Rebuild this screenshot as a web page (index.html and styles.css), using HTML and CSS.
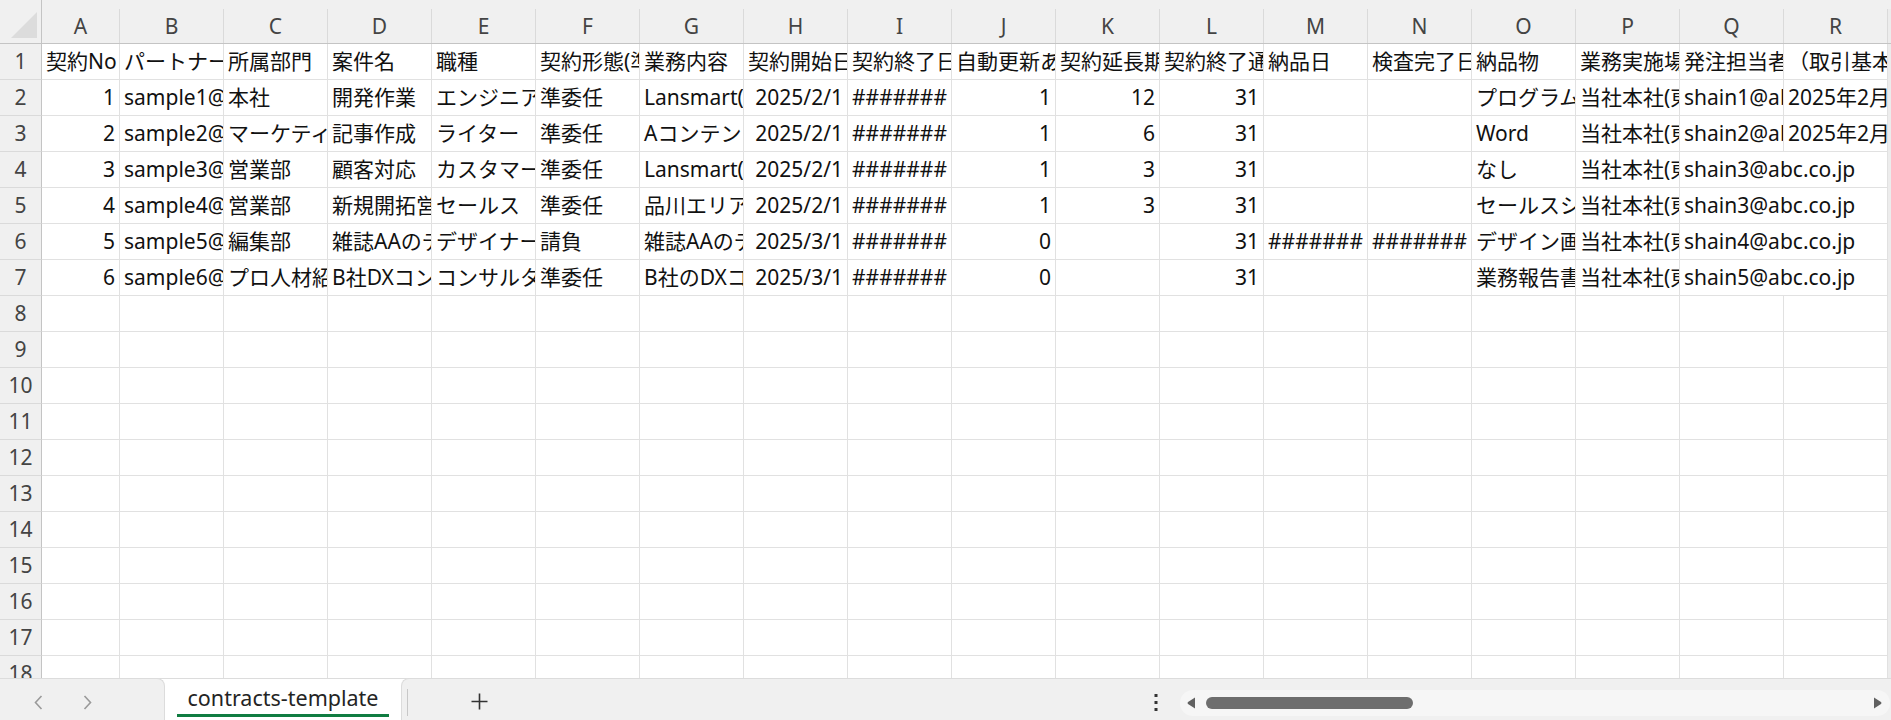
FILE: index.html
```html
<!DOCTYPE html>
<html lang="ja">
<head>
<meta charset="utf-8">
<title>contracts-template</title>
<link rel="stylesheet" href="styles.css">
</head>
<body>
<div class="sheet">
  <div class="colhead">
    <div class="corner"><svg width="41" height="43" viewBox="0 0 41 43"><polygon points="11,38 37,38 37,12" fill="#dcdcdc"/></svg></div>
    <div>A</div><div>B</div><div>C</div><div>D</div><div>E</div><div>F</div><div>G</div><div>H</div><div>I</div><div>J</div><div>K</div><div>L</div><div>M</div><div>N</div><div>O</div><div>P</div><div>Q</div><div>R</div><div class="edge"></div>
  </div>
  <div class="row">
    <div class="rh">1</div>
    <div>契約No</div><div>パートナーメールアドレス</div><div>所属部門</div><div>案件名</div><div>職種</div><div>契約形態(準委任/請負)</div><div>業務内容</div><div>契約開始日</div><div>契約終了日</div><div>自動更新あり</div><div>契約延長期間</div><div>契約終了通知期限</div><div>納品日</div><div>検査完了日</div><div>納品物</div><div>業務実施場所</div><div>発注担当者メールアドレス</div><div>（取引基本契約書）</div>
    <div class="edge"></div>
  </div>
  <div class="row">
    <div class="rh">2</div>
    <div class="n">1</div><div>sample1@example.com</div><div>本社</div><div>開発作業</div><div>エンジニア</div><div>準委任</div><div>Lansmart(ランスマート)の開発</div><div class="n">2025/2/1</div><div class="x">#######</div><div class="n">1</div><div class="n">12</div><div class="n">31</div><div></div><div></div><div>プログラム</div><div>当社本社(東京)</div><div>shain1@abc.co.jp</div><div>2025年2月1日</div>
    <div class="edge"></div>
  </div>
  <div class="row">
    <div class="rh">3</div>
    <div class="n">2</div><div>sample2@example.com</div><div>マーケティング部</div><div>記事作成</div><div>ライター</div><div>準委任</div><div>Aコンテンツの記事作成</div><div class="n">2025/2/1</div><div class="x">#######</div><div class="n">1</div><div class="n">6</div><div class="n">31</div><div></div><div></div><div>Word</div><div>当社本社(東京)</div><div>shain2@abc.co.jp</div><div>2025年2月1日</div>
    <div class="edge"></div>
  </div>
  <div class="row">
    <div class="rh">4</div>
    <div class="n">3</div><div>sample3@example.com</div><div>営業部</div><div>顧客対応</div><div>カスタマーサポート</div><div>準委任</div><div>Lansmart(ランスマート)の顧客対応</div><div class="n">2025/2/1</div><div class="x">#######</div><div class="n">1</div><div class="n">3</div><div class="n">31</div><div></div><div></div><div>なし</div><div>当社本社(東京)</div><div class="wide">shain3@abc.co.jp</div>
    <div class="edge"></div>
  </div>
  <div class="row">
    <div class="rh">5</div>
    <div class="n">4</div><div>sample4@example.com</div><div>営業部</div><div>新規開拓営業</div><div>セールス</div><div>準委任</div><div>品川エリアの新規開拓</div><div class="n">2025/2/1</div><div class="x">#######</div><div class="n">1</div><div class="n">3</div><div class="n">31</div><div></div><div></div><div>セールスシート</div><div>当社本社(東京)</div><div class="wide">shain3@abc.co.jp</div>
    <div class="edge"></div>
  </div>
  <div class="row">
    <div class="rh">6</div>
    <div class="n">5</div><div>sample5@example.com</div><div>編集部</div><div>雑誌AAのデザイン</div><div>デザイナー</div><div>請負</div><div>雑誌AAのデザイン制作</div><div class="n">2025/3/1</div><div class="x">#######</div><div class="n">0</div><div></div><div class="n">31</div><div class="x">#######</div><div class="x">#######</div><div>デザイン画像</div><div>当社本社(東京)</div><div class="wide">shain4@abc.co.jp</div>
    <div class="edge"></div>
  </div>
  <div class="row">
    <div class="rh">7</div>
    <div class="n">6</div><div>sample6@example.com</div><div>プロ人材紹介部</div><div>B社DXコンサル</div><div>コンサルタント</div><div>準委任</div><div>B社のDXコンサルティング</div><div class="n">2025/3/1</div><div class="x">#######</div><div class="n">0</div><div></div><div class="n">31</div><div></div><div></div><div>業務報告書</div><div>当社本社(東京)</div><div class="wide">shain5@abc.co.jp</div>
    <div class="edge"></div>
  </div>
  <div class="row"><div class="rh">8</div><div></div><div></div><div></div><div></div><div></div><div></div><div></div><div></div><div></div><div></div><div></div><div></div><div></div><div></div><div></div><div></div><div></div><div></div><div class="edge"></div></div>
  <div class="row"><div class="rh">9</div><div></div><div></div><div></div><div></div><div></div><div></div><div></div><div></div><div></div><div></div><div></div><div></div><div></div><div></div><div></div><div></div><div></div><div></div><div class="edge"></div></div>
  <div class="row"><div class="rh">10</div><div></div><div></div><div></div><div></div><div></div><div></div><div></div><div></div><div></div><div></div><div></div><div></div><div></div><div></div><div></div><div></div><div></div><div></div><div class="edge"></div></div>
  <div class="row"><div class="rh">11</div><div></div><div></div><div></div><div></div><div></div><div></div><div></div><div></div><div></div><div></div><div></div><div></div><div></div><div></div><div></div><div></div><div></div><div></div><div class="edge"></div></div>
  <div class="row"><div class="rh">12</div><div></div><div></div><div></div><div></div><div></div><div></div><div></div><div></div><div></div><div></div><div></div><div></div><div></div><div></div><div></div><div></div><div></div><div></div><div class="edge"></div></div>
  <div class="row"><div class="rh">13</div><div></div><div></div><div></div><div></div><div></div><div></div><div></div><div></div><div></div><div></div><div></div><div></div><div></div><div></div><div></div><div></div><div></div><div></div><div class="edge"></div></div>
  <div class="row"><div class="rh">14</div><div></div><div></div><div></div><div></div><div></div><div></div><div></div><div></div><div></div><div></div><div></div><div></div><div></div><div></div><div></div><div></div><div></div><div></div><div class="edge"></div></div>
  <div class="row"><div class="rh">15</div><div></div><div></div><div></div><div></div><div></div><div></div><div></div><div></div><div></div><div></div><div></div><div></div><div></div><div></div><div></div><div></div><div></div><div></div><div class="edge"></div></div>
  <div class="row"><div class="rh">16</div><div></div><div></div><div></div><div></div><div></div><div></div><div></div><div></div><div></div><div></div><div></div><div></div><div></div><div></div><div></div><div></div><div></div><div></div><div class="edge"></div></div>
  <div class="row"><div class="rh">17</div><div></div><div></div><div></div><div></div><div></div><div></div><div></div><div></div><div></div><div></div><div></div><div></div><div></div><div></div><div></div><div></div><div></div><div></div><div class="edge"></div></div>
  <div class="row"><div class="rh">18</div><div></div><div></div><div></div><div></div><div></div><div></div><div></div><div></div><div></div><div></div><div></div><div></div><div></div><div></div><div></div><div></div><div></div><div></div><div class="edge"></div></div>
</div>
<div class="tabbar">
  <div class="nav">
    <svg class="chev" width="9" height="15" viewBox="0 0 9 15"><path d="M7.5 1 L1.5 7.5 L7.5 14" fill="none" stroke="#9a9a9a" stroke-width="1.6"/></svg>
    <svg class="chev" width="9" height="15" viewBox="0 0 9 15"><path d="M1.5 1 L7.5 7.5 L1.5 14" fill="none" stroke="#9a9a9a" stroke-width="1.6"/></svg>
  </div>
  <div class="tab"><span class="tab-label">contracts-template</span></div>
  <div class="rest">
    <span class="sep"></span>
    <svg class="plus" width="17" height="17" viewBox="0 0 17 17"><path d="M8.5 0.5 V16.5 M0.5 8.5 H16.5" stroke="#333" stroke-width="1.6"/></svg>
    <svg class="dots" width="4" height="17" viewBox="0 0 4 17"><rect x="0.5" y="0" width="3" height="3" fill="#333"/><rect x="0.5" y="7" width="3" height="3" fill="#333"/><rect x="0.5" y="14" width="3" height="3" fill="#333"/></svg>
    <div class="track">
      <svg class="arr" width="9" height="12" viewBox="0 0 9 12"><path d="M8 0.5 V11.5 L1 7 Q0 6 1 5 Z" fill="#616161"/></svg>
      <span class="thumb"></span>
      <svg class="arr arr-r" width="9" height="12" viewBox="0 0 9 12"><path d="M1 0.5 V11.5 L8 7 Q9 6 8 5 Z" fill="#616161"/></svg>
    </div>
  </div>
</div>
</body>
</html>
```
FILE: styles.css
```css
* { box-sizing: border-box; }
html, body { margin: 0; padding: 0; }
body {
  width: 1891px;
  height: 720px;
  overflow: hidden;
  background: #fff;
  font-family: "Noto Sans", "Noto Sans CJK JP", sans-serif;
}
.sheet {
  height: 679px;
  overflow: hidden;
  border-bottom: 1px solid #dcdcdc;
}
.colhead, .row {
  display: grid;
  grid-template-columns: 42px 78px repeat(17, 104px) 1fr;
}
.colhead {
  height: 44px;
  background: #f0f0f0;
  border-bottom: 1px solid #c4c4c4;
  align-items: end;
}
.colhead > div {
  height: 34px;
  border-right: 1px solid #dadada;
  color: #444;
  font-size: 21px;
  line-height: 34px;
  text-align: center;
}
.colhead > .corner {
  height: 43px;
  border-right: 1px solid #c4c4c4;
}
.corner svg { display: block; }
.row { height: 36px; }
.row > div {
  border-right: 1px solid #e1e1e1;
  border-bottom: 1px solid #e1e1e1;
  font-size: 21px;
  line-height: 35px;
  padding: 0 4px;
  white-space: nowrap;
  overflow: hidden;
  color: #111;
}
.row > .rh {
  background: #f0f0f0;
  border-right-color: #c4c4c4;
  border-bottom-color: #dadada;
  color: #444;
  text-align: center;
  padding: 0;
}
.row > .n { text-align: right; }
.row > .x { text-align: center; padding: 0; }
.row > .wide { grid-column: span 2; }
.colhead > .edge, .row > .edge {
  background: #ececec;
  border: none;
}

.tabbar {
  height: 41px;
  display: flex;
  background: #fff;
}
.nav {
  width: 165px;
  background: #f0f0f0;
  border-top: 1px solid #dcdcdc;
  border-right: 1px solid #dcdcdc;
  border-top-right-radius: 8px;
  display: flex;
  align-items: center;
  padding-left: 34px;
  gap: 40px;
  margin-top: -1px;
}
.chev { display: block; margin-top: 6px; }
.tab {
  width: 236px;
  padding: 0 12px;
  display: flex;
}
.tab-label {
  flex: 1;
  height: 38px;
  border-bottom: 3px solid #107c41;
  font-family: "Noto Sans", sans-serif;
  font-size: 21.5px;
  line-height: 38px;
  color: #242424;
  text-align: center;
}
.rest {
  flex: 1;
  background: #f0f0f0;
  border-top: 1px solid #dcdcdc;
  border-left: 1px solid #dcdcdc;
  border-top-left-radius: 8px;
  display: flex;
  align-items: center;
  margin-top: -1px;
}
.sep {
  width: 1px;
  height: 27px;
  margin-left: 5px;
  margin-top: 6px;
  background: #c8c8c8;
}
.plus { display: block; margin-left: 63px; margin-top: 4px; }
.dots { display: block; margin-left: auto; margin-top: 5px; }
.track {
  width: 710px;
  height: 26px;
  margin-left: 22px;
  margin-right: 1px;
  margin-top: 6px;
  background: #f6f6f6;
  border-radius: 13px;
  display: flex;
  align-items: center;
  padding-left: 7px;
}
.arr { display: block; }
.thumb {
  width: 207px;
  height: 12px;
  margin-left: 10px;
  background: #6e6e6e;
  border-radius: 6px;
}
.arr-r { margin-left: auto; margin-right: 8px; }
```
